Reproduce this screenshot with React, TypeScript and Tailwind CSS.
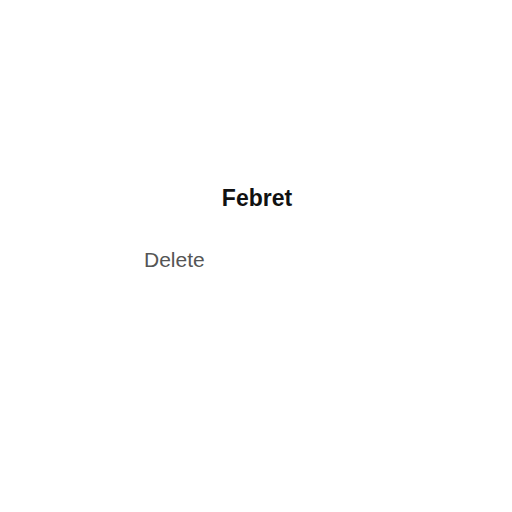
export default function App() {
  return (
    <div className="w-[512px] h-[512px] bg-white flex flex-col pt-[184px]" style={{ fontFamily: '"Liberation Sans", Arial, sans-serif' }}>
      <div className="text-center pl-[2px] text-[23px] leading-[28px] font-bold text-[#111]">Febret</div>
      <div className="mt-[34px] pl-[144px] text-[21px] leading-[28px] text-[#555]">Delete</div>
    </div>
  );
}
